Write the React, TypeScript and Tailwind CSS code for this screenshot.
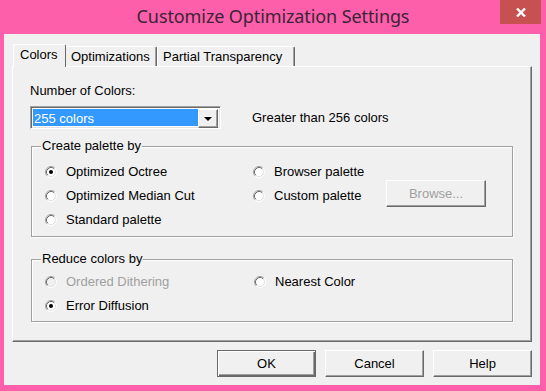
import React from 'react';

interface RadioProps {
  label: string;
  checked?: boolean;
  disabled?: boolean;
}

const Radio: React.FC<RadioProps> = ({ label, checked = false, disabled = false }) => (
  <div className="flex items-center h-[24px]">
    <svg width="12" height="12" viewBox="0 0 12 12" className="shrink-0">
      <circle cx="6" cy="6" r="4.5" fill={disabled ? '#f0f0f0' : '#ffffff'} />
      <path d="M2.11 9.89 A5.5 5.5 0 0 1 9.89 2.11" fill="none" stroke="#a0a0a0" strokeWidth="1" />
      <path d="M9.89 2.11 A5.5 5.5 0 0 1 2.11 9.89" fill="none" stroke="#ffffff" strokeWidth="1" />
      <path d="M2.82 9.18 A4.5 4.5 0 0 1 9.18 2.82" fill="none" stroke="#696969" strokeWidth="1" />
      <path d="M9.18 2.82 A4.5 4.5 0 0 1 2.82 9.18" fill="none" stroke="#e3e3e3" strokeWidth="1" />
      {checked && <circle cx="6" cy="6" r="2" fill="#000000" />}
    </svg>
    <span className={`ml-[9px] whitespace-nowrap ${disabled ? 'text-[#a0a0a0]' : 'text-black'}`}>{label}</span>
  </div>
);

const GroupBox: React.FC<{ title: string; className: string; children: React.ReactNode }> = ({ title, className, children }) => (
  <div className={`relative border border-[#a0a0a0] shadow-[inset_1px_1px_0_#ffffff,1px_1px_0_#ffffff] ${className}`}>
    <span className="absolute left-[9px] -top-[9px] bg-[#f0f0f0] px-[1px] leading-[16px] text-black">{title}</span>
    {children}
  </div>
);

const Button: React.FC<{ label: string; primary?: boolean; disabled?: boolean; className?: string }> = ({
  label,
  primary = false,
  disabled = false,
  className = '',
}) => (
  <div
    className={`flex items-center justify-center bg-[#f0f0f0] ${
      primary
        ? 'border border-[#696969] shadow-[inset_1px_1px_0_#ffffff,inset_-1px_-1px_0_#696969,inset_-2px_-2px_0_#a0a0a0]'
        : 'border border-t-white border-l-white border-r-[#696969] border-b-[#696969] shadow-[inset_-1px_-1px_0_#a0a0a0]'
    } ${disabled ? 'text-[#a0a0a0]' : 'text-black'} ${className}`}
  >
    {label}
  </div>
);

export default function App() {
  return (
    <div className="w-[546px] h-[391px] bg-[#fe5fab] flex flex-col overflow-hidden font-['Liberation_Sans',Arial,sans-serif] text-[13px]">
      {/* title bar */}
      <div className="h-[34px] shrink-0 flex">
        <div className="w-[46px]" />
        <div className="flex-1 flex items-center justify-center pb-[1px] font-['Noto_Sans',sans-serif] text-[18px] tracking-[-0.1px] text-[#3b2435]">
          Customize Optimization Settings
        </div>
        <div className="w-[41px] h-[24px] mr-[5px] bg-[#c75050] flex items-center justify-center">
          <svg width="10" height="9" viewBox="0 0 10 9">
            <path d="M1 0.5 L9 8.5 M9 0.5 L1 8.5" stroke="#ffffff" strokeWidth="2.4" />
          </svg>
        </div>
      </div>

      {/* client area */}
      <div className="ml-[4px] mr-[6px] h-[351px] bg-[#f0f0f0] flex flex-col">
        {/* tabs */}
        <div className="mt-[10px] ml-[9px] h-[22px] flex items-end relative z-10">
          <div className="h-[23px] -mb-[1px] w-[53px] bg-[#f0f0f0] border-t border-l border-t-white border-l-white border-r border-r-[#696969] rounded-tl-[2px] rounded-tr-[2px] pl-[6px] pt-[2px] leading-[16px]">
            Colors
          </div>
          <div className="h-[20px] w-[91px] border-t border-t-white border-r border-r-[#696969] shadow-[inset_-1px_0_0_#a0a0a0] rounded-tr-[2px] pl-[5px] pt-[2px] leading-[16px]">
            Optimizations
          </div>
          <div className="h-[20px] w-[138px] border-t border-l border-t-white border-l-white border-r border-r-[#696969] shadow-[inset_-1px_0_0_#a0a0a0] rounded-tr-[2px] pl-[5px] pt-[2px] leading-[16px]">
            Partial Transparency
          </div>
        </div>

        {/* tab panel */}
        <div className="ml-[8px] w-[520px] h-[276px] border border-t-white border-l-white border-r-[#696969] border-b-[#696969] shadow-[inset_-1px_-1px_0_#a0a0a0] flex flex-col">
          <div className="mt-[16px] ml-[17px] leading-[16px]">Number of Colors:</div>

          <div className="mt-[7px] ml-[17px] flex items-center">
            <div className="w-[191px] h-[23px] border border-t-[#a0a0a0] border-l-[#a0a0a0] border-r-white border-b-white shadow-[inset_1px_1px_0_#696969,inset_-1px_-1px_0_#e3e3e3] bg-white flex p-[2px]">
              <div className="flex-1 bg-[#3399ff] text-white leading-[19px] pl-[1px]">255 colors</div>
              <div className="w-[20px] h-[19px] bg-[#f0f0f0] border border-t-white border-l-white border-r-[#696969] border-b-[#696969] shadow-[inset_-1px_-1px_0_#a0a0a0] flex items-center justify-center">
                <svg width="8" height="4" viewBox="0 0 8 4">
                  <path d="M0 0 H8 L4 4 Z" fill="#000000" />
                </svg>
              </div>
            </div>
            <span className="ml-[31px] text-black">Greater than 256 colors</span>
          </div>

          <GroupBox title="Create palette by" className="mt-[17px] ml-[18px] w-[482px] h-[91px]">
            <div className="flex pt-[13px] pl-[13px]">
              <div className="w-[208px] flex flex-col">
                <Radio label="Optimized Octree" checked />
                <Radio label="Optimized Median Cut" />
                <Radio label="Standard palette" />
              </div>
              <div className="flex flex-col">
                <Radio label="Browser palette" />
                <div className="flex items-center">
                  <div className="w-[133px]">
                    <Radio label="Custom palette" />
                  </div>
                  <Button label="Browse..." disabled className="w-[100px] h-[27px] -mt-[5px]" />
                </div>
              </div>
            </div>
          </GroupBox>

          <GroupBox title="Reduce colors by" className="mt-[22px] ml-[18px] w-[482px] h-[63px]">
            <div className="flex pt-[10px] pl-[13px]">
              <div className="w-[209px] flex flex-col">
                <Radio label="Ordered Dithering" disabled />
                <Radio label="Error Diffusion" checked />
              </div>
              <div className="flex flex-col">
                <Radio label="Nearest Color" />
              </div>
            </div>
          </GroupBox>
        </div>

        {/* buttons */}
        <div className="mt-[8px] mr-[8px] flex justify-end gap-[9px]">
          <Button label="OK" primary className="w-[99px] h-[27px]" />
          <Button label="Cancel" className="w-[99px] h-[27px]" />
          <Button label="Help" className="w-[99px] h-[27px]" />
        </div>
      </div>
    </div>
  );
}
